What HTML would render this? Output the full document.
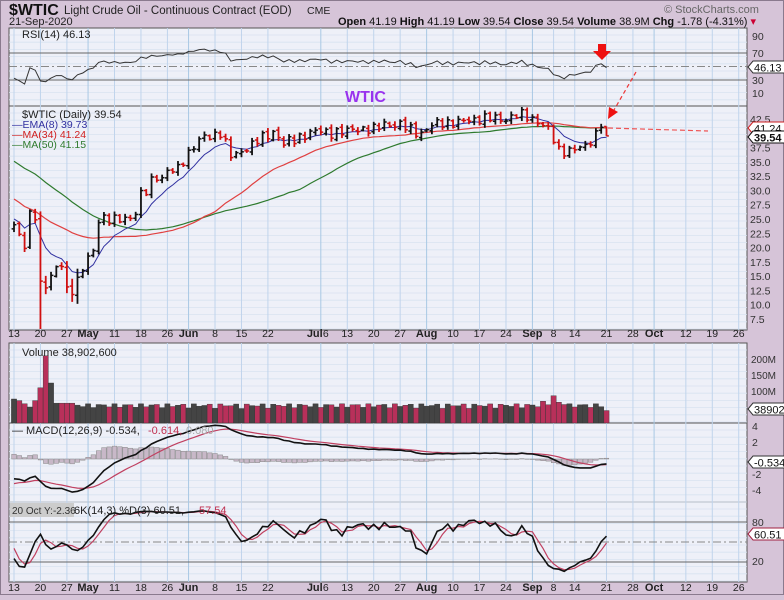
<!DOCTYPE html>
<html><head><meta charset="utf-8">
<style>
html,body{margin:0;padding:0;background:#d6c4d8;}
body{width:784px;height:595px;overflow:hidden;font-family:"Liberation Sans",sans-serif;}
svg text{font-family:"Liberation Sans",sans-serif;}
</style></head><body>
<svg id="s" width="784" height="595" xmlns="http://www.w3.org/2000/svg">
<rect x="0" y="0" width="784" height="595" fill="#d6c4d8"/>
<rect x="0.5" y="0.5" width="783" height="594" fill="none" stroke="#8a7a8e"/>
<text x="9" y="15" font-size="16" font-weight="bold" fill="#111">$WTIC</text>
<text x="64" y="14" font-size="11.5" fill="#222">Light Crude Oil - Continuous Contract (EOD)</text>
<text x="307" y="14" font-size="10.5" fill="#222">CME</text>
<text x="9" y="25" font-size="11" fill="#222">21-Sep-2020</text>
<text x="664" y="13" font-size="11" fill="#666">© StockCharts.com</text>
<text x="338" y="25" font-size="11" fill="#111"><tspan font-weight="bold">Open</tspan> 41.19 <tspan font-weight="bold">High</tspan> 41.19 <tspan font-weight="bold">Low</tspan> 39.54 <tspan font-weight="bold">Close</tspan> 39.54 <tspan font-weight="bold">Volume</tspan> 38.9M <tspan font-weight="bold">Chg</tspan> -1.78 (-4.31%) <tspan fill="#c03">▾</tspan></text>
<g id="g"></g>
</svg>
<script>
(function(){
var NS="http://www.w3.org/2000/svg",G=document.getElementById("g");
function el(t,a,txt){var e=document.createElementNS(NS,t);for(var k in a)e.setAttribute(k,a[k]);if(txt!=null)e.textContent=txt;G.appendChild(e);return e;}
var L=9,R=747,D=5.29,X0=14;
function X(i){return X0+i*D;}
var P=[[28,106],[106,330],[343,423],[423,502],[502,582]];
P.forEach(function(p){el("rect",{x:L,y:p[0],width:R-L,height:p[1]-p[0],fill:"#eef0f8",stroke:"#555","stroke-width":1});});
var labs=[[0,"13"],[5,"20"],[10,"27"],[14,"May",1],[19,"11"],[24,"18"],[29,"26"],[33,"Jun",1],[38,"8"],[43,"15"],[48,"22"],[58,"Jul",1,"6"],[63,"13"],[68,"20"],[73,"27"],[78,"Aug",1],[83,"10"],[88,"17"],[93,"24"],[98,"Sep",1],[102,"8"],[106,"14"],[112,"21"],[117,"28"],[121,"Oct",1],[127,"12"],[132,"19"],[137,"26"]];
P.forEach(function(p){
 for(var y=p[0]+7;y<p[1];y+=7.2) el("line",{x1:L,x2:R,y1:y,y2:y,stroke:"#d8e2f0","stroke-width":0.8});
 labs.forEach(function(l){var x=X(l[0]);if(x<L||x>R)return;
  el("line",{x1:x,x2:x,y1:p[0],y2:p[1],stroke:l[2]?"#a8c8e4":"#c0d4ec","stroke-width":1});});
});
[337,591].forEach(function(yy){labs.forEach(function(l){var x=X(l[0]);
 if(l[3]){el("text",{x:x-14,y:yy,"font-size":11,"font-weight":"bold",fill:"#222"},"Jul");el("text",{x:x+2,y:yy,"font-size":10.5,fill:"#222"},"6");}
 else el("text",{x:x,y:yy,"font-size":l[2]?11:10.5,"font-weight":l[2]?"bold":"normal",fill:"#222","text-anchor":"middle"},l[1]);});});
var A=[[-50,52],[-35,47],[-25,31],[-18,22],[-10,26],[-5,27],[-1,24],[0,24],[1,22],[2,20],[3,26],[4,25.5],[5,14],[6,13],[7,15],[8,16.5],[9,17],[10,13],[11,12],[12,14.5],[13,16],[14,18.5],[15,19.5],[16,25],[17,25],[18,24.5],[19,25],[20,25],[21,25.5],[22,25],[23,26],[24,29],[25,30],[26,32],[27,32.5],[28,32],[29,33],[30,33.5],[31,34],[32,35.5],[33,36.5],[34,37.5],[35,38.5],[36,39.5],[39,40],[41,36],[44,37.5],[45,37.8],[46.5,39],[49,40.4],[51,38],[54,39.5],[58,40.4],[62.5,40],[64.5,41],[68,40.5],[70,41.8],[73,41.3],[77,40.1],[79.5,41.5],[81.5,42],[84,41.8],[88,42.7],[92,42.4],[95,43.2],[97.5,42.8],[99.5,42],[101,40.5],[103,37],[106,37.2],[108,37.5],[109,38.8],[110.8,41],[111.5,41.2],[112,39.54]];
function interp(i){for(var k=0;k<A.length-1;k++){if(i>=A[k][0]&&i<=A[k+1][0]){var t=(i-A[k][0])/(A[k+1][0]-A[k][0]);return A[k][1]+t*(A[k+1][1]-A[k][1]);}}return A[A.length-1][1];}
var C=[],I=[];
for(var i=-50;i<=112;i++){var base=interp(i);var amp=(i>=0&&i<16)?1:0;var n=(i==112||i==111)?0:(Math.sin(i*2.7)*0.75+Math.sin(i*1.13)*0.35)*Math.min(1,base/30)*(1-amp*0.3);C.push(base+n);I.push(i);}
var N=C.length,O=[],H=[],Lo=[];
for(var k=0;k<N;k++){O[k]=k?C[k-1]+Math.sin(k*3.1)*0.25:C[k];var r=0.3+Math.abs(Math.sin(k*1.3))*0.6;H[k]=Math.max(O[k],C[k])+r*(C[k]>15?0.7:1.8);Lo[k]=Math.min(O[k],C[k])-r*(C[k]>15?0.7:1.8);}
var last=N-1;O[last]=41.19;H[last]=41.19;Lo[last]=39.54;
Lo[55]=-5;
function ema(a,n){var r=[],m=2/(n+1);for(var k=0;k<a.length;k++)r[k]=k?a[k]*m+r[k-1]*(1-m):a[k];return r;}
function sma(a,n){var r=[];for(var k=0;k<a.length;k++){var s=0,c=0;for(var j=Math.max(0,k-n+1);j<=k;j++){s+=a[j];c++;}r[k]=s/c;}return r;}
var E8=ema(C,8),M34=sma(C,34),M50=sma(C,50);
function py(p){return 119+(42.5-p)*5.714;}
function line(arr,f,col,w,from){var pts=[];for(var k=from;k<N;k++){var x=X(I[k]);if(x<L)continue;pts.push(x.toFixed(1)+","+f(arr[k]).toFixed(1));}el("polyline",{points:pts.join(" "),fill:"none",stroke:col,"stroke-width":w});}
for(var p=7.5;p<=42.6;p+=2.5){var y=py(p);el("text",{x:750,y:y+4,"font-size":10.5,fill:"#333"},p.toFixed(1));}
var clipY=function(y){return Math.max(107,Math.min(329,y));};
line(M50,function(v){return clipY(py(v));},"#2e7a2e",1.2,50);
line(M34,function(v){return clipY(py(v));},"#e04040",1.2,50);
line(E8,function(v){return clipY(py(v));},"#3030a0",1,50);
for(var k=50;k<N;k++){var x=X(I[k]),up=C[k]>=O[k],col=up?"#111":"#d01010";
 el("line",{x1:x,x2:x,y1:clipY(py(H[k])),y2:clipY(py(Lo[k])),stroke:col,"stroke-width":1.8});
 el("line",{x1:x-2.4,x2:x,y1:py(O[k]),y2:py(O[k]),stroke:col,"stroke-width":1.5});
 el("line",{x1:x,x2:x+2.4,y1:py(C[k]),y2:py(C[k]),stroke:col,"stroke-width":1.5});}
var rs=[],ag=0,al=0;for(var k=1;k<N;k++){var d=C[k]-C[k-1];var g=d>0?d:0,l=d<0?-d:0;if(k<=14){ag+=g/14;al+=l/14;}else{ag=(ag*13+g)/14;al=(al*13+l)/14;}rs[k]=100-100/(1+ag/(al||1e-6));}
rs[0]=50;
function ry(v){return 100.25-0.675*v;}
[70,30].forEach(function(v){el("line",{x1:L,x2:R,y1:ry(v),y2:ry(v),stroke:"#666","stroke-width":1});});
el("line",{x1:L,x2:R,y1:ry(50),y2:ry(50),stroke:"#888","stroke-width":1,"stroke-dasharray":"8,3,2,3"});
line(rs,ry,"#333",1,50);
[[90,40],[70,57],[30,84],[10,97]].forEach(function(a){el("text",{x:752,y:a[1],"font-size":10.5,fill:"#333"},a[0]);});
var V=[];for(var k=0;k<N;k++){var i=I[k];var v=i<0?130:i<8?[75,70,60,50,70,110,210,125][i]:i<12?62:45+Math.abs(Math.sin(i*1.9))*15;if(i>=100&&i<=104)v+=8;if(i==102)v=85;V.push(v);}
V[last]=38.9;
for(var k=50;k<N;k++){var x=X(I[k]),h=V[k]*0.32;el("rect",{x:x-2.6,y:423-h,width:5.2,height:h,fill:C[k]>=O[k]?"#444":"#b8305a",stroke:"#333","stroke-width":0.4});}
[["200M",363],["150M",379],["100M",395]].forEach(function(a){el("text",{x:751,y:a[1],"font-size":10,fill:"#333"},a[0]);});
var e12=ema(C,12),e26=ema(C,26),M=[];for(var k=0;k<N;k++)M[k]=e12[k]-e26[k];var S=ema(M,9);
function my(v){return Math.max(424,Math.min(501,459-8*v));}
for(var k=50;k<N;k++){var x=X(I[k]),h=M[k]-S[k];el("rect",{x:x-2.3,y:Math.min(my(0),my(h)),width:4.6,height:Math.abs(my(h)-my(0)),fill:"#c8b8c8",stroke:"#888","stroke-width":0.5});}
line(S,my,"#c04060",1.2,50);
line(M,my,"#111",1.6,50);
[["4",430],["2",446],["-2",478],["-4",494]].forEach(function(a){el("text",{x:752,y:a[1],"font-size":10.5,fill:"#333"},a[0]);});
var FK=[];for(var k=0;k<N;k++){var hh=-1e9,ll=1e9;for(var j=Math.max(0,k-13);j<=k;j++){hh=Math.max(hh,H[j]);ll=Math.min(ll,Math.max(Lo[j],5));}FK[k]=100*(C[k]-ll)/(hh-ll||1);}
var SK=sma(FK,3),SD=sma(SK,3);
function sy(v){return 575.3-0.667*v;}
[80,20].forEach(function(v){el("line",{x1:L,x2:R,y1:sy(v),y2:sy(v),stroke:"#666","stroke-width":1});});
el("line",{x1:L,x2:R,y1:sy(50),y2:sy(50),stroke:"#888","stroke-width":1,"stroke-dasharray":"8,3,2,3"});
line(SD,sy,"#c04060",1.2,50);
line(SK,sy,"#111",1.6,50);
[["80",526],["20",565]].forEach(function(a){el("text",{x:752,y:a[1],"font-size":10.5,fill:"#333"},a[0]);});
function tag(y,t,c){el("path",{d:"M748,"+y+" l5,-6 h44 v12 h-44 z",fill:"#fff",stroke:c,"stroke-width":1});el("text",{x:754,y:y+4.5,"font-size":11,fill:"#111","font-weight":c=="#111"?"bold":"normal"},t);}
tag(67,"46.13","#333");tag(128,"41.24","#d02020");tag(137,"39.54","#111");tag(409,"389026","#333");tag(462,"-0.534","#333");tag(534,"60.51","#a02040");
el("text",{x:22,y:38,"font-size":11,fill:"#222"},"RSI(14) 46.13");
el("text",{x:22,y:118,"font-size":11,fill:"#222"},"$WTIC (Daily) 39.54");
el("text",{x:12,y:128,"font-size":10.5,fill:"#3030a0"},"—EMA(8) 39.73");
el("text",{x:12,y:138,"font-size":10.5,fill:"#d02020"},"—MA(34) 41.24");
el("text",{x:12,y:148,"font-size":10.5,fill:"#2e7a2e"},"—MA(50) 41.15");
el("text",{x:22,y:356,"font-size":11,fill:"#222"},"Volume 38,902,600");
el("text",{x:12,y:434,"font-size":11,fill:"#222"},"— MACD(12,26,9) -0.534, ");
el("text",{x:148,y:434,"font-size":11,fill:"#c03050"},"-0.614,");
el("text",{x:186,y:434,"font-size":11,fill:"#aaa"},"0.080");
el("text",{x:74,y:514,"font-size":11,fill:"#222"},"6K(14,3) %D(3) 60.51,");
el("text",{x:199,y:514,"font-size":11,fill:"#c03050"},"57.54");
el("rect",{x:10,y:503,width:64,height:14,fill:"#ccc"});
el("text",{x:12,y:514,"font-size":10,fill:"#333"},"20 Oct Y:-2.36");
el("text",{x:345,y:102,"font-size":16,"font-weight":"bold",fill:"#9933ee"},"WTIC");
el("path",{d:"M598,44 h8 v7 h5 l-9,9 l-9,-9 h5 z",fill:"#ee1111"});
el("line",{x1:636,y1:72,x2:614,y2:110,stroke:"#ee3333","stroke-width":1.2,"stroke-dasharray":"4,3"});
el("path",{d:"M608,119 l1,-12 l9,5 z",fill:"#ee1111"});
el("line",{x1:608,y1:128,x2:708,y2:131,stroke:"#ee5555","stroke-width":1.2,"stroke-dasharray":"5,3"});
})();
</script>
</body></html>
